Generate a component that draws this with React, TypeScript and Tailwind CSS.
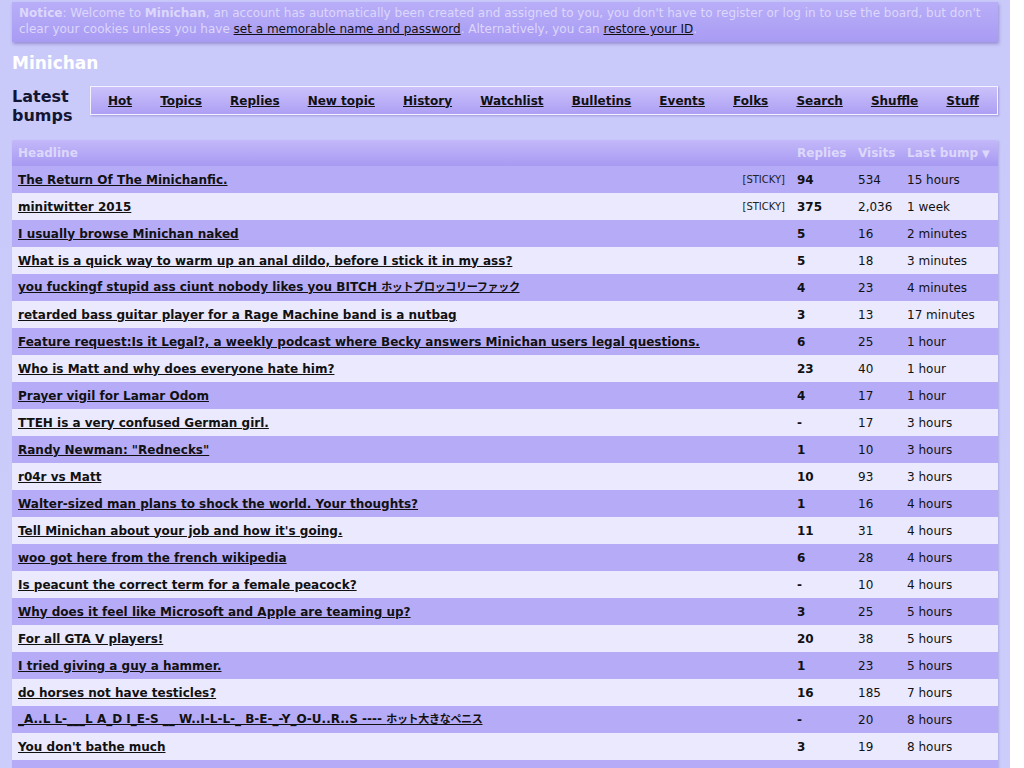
import React from "react";

type Row = { t: string; j?: string; s?: boolean; r: string; v: string; l: string };

const rows: Row[] = [
  { t: "The Return Of The Minichanfic.", s: true, r: "94", v: "534", l: "15 hours" },
  { t: "minitwitter 2015", s: true, r: "375", v: "2,036", l: "1 week" },
  { t: "I usually browse Minichan naked", r: "5", v: "16", l: "2 minutes" },
  { t: "What is a quick way to warm up an anal dildo, before I stick it in my ass?", r: "5", v: "18", l: "3 minutes" },
  { t: "you fuckingf stupid ass ciunt nobody likes you BITCH ", j: "ホットブロッコリーファック", r: "4", v: "23", l: "4 minutes" },
  { t: "retarded bass guitar player for a Rage Machine band is a nutbag", r: "3", v: "13", l: "17 minutes" },
  { t: "Feature request:Is it Legal?, a weekly podcast where Becky answers Minichan users legal questions.", r: "6", v: "25", l: "1 hour" },
  { t: "Who is Matt and why does everyone hate him?", r: "23", v: "40", l: "1 hour" },
  { t: "Prayer vigil for Lamar Odom", r: "4", v: "17", l: "1 hour" },
  { t: "TTEH is a very confused German girl.", r: "-", v: "17", l: "3 hours" },
  { t: "Randy Newman: \"Rednecks\"", r: "1", v: "10", l: "3 hours" },
  { t: "r04r vs Matt", r: "10", v: "93", l: "3 hours" },
  { t: "Walter-sized man plans to shock the world. Your thoughts?", r: "1", v: "16", l: "4 hours" },
  { t: "Tell Minichan about your job and how it's going.", r: "11", v: "31", l: "4 hours" },
  { t: "woo got here from the french wikipedia", r: "6", v: "28", l: "4 hours" },
  { t: "Is peacunt the correct term for a female peacock?", r: "-", v: "10", l: "4 hours" },
  { t: "Why does it feel like Microsoft and Apple are teaming up?", r: "3", v: "25", l: "5 hours" },
  { t: "For all GTA V players!", r: "20", v: "38", l: "5 hours" },
  { t: "I tried giving a guy a hammer.", r: "1", v: "23", l: "5 hours" },
  { t: "do horses not have testicles?", r: "16", v: "185", l: "7 hours" },
  { t: "_A..L L-___L A_D I_E-S __ W..I-L-L-_ B-E-_-Y_O-U..R..S ---- ", j: "ホット大きなペニス", r: "-", v: "20", l: "8 hours" },
  { t: "You don't bathe much", r: "3", v: "19", l: "8 hours" },
];

const nav = ["Hot", "Topics", "Replies", "New topic", "History", "Watchlist", "Bulletins", "Events", "Folks", "Search", "Shuffle", "Stuff"];

export default function App() {
  return (
    <div
      className="min-h-screen w-full bg-white overflow-hidden"
      style={{ fontFamily: '"DejaVu Sans", "Noto Sans CJK JP", sans-serif' }}
    >
      <div className="w-[1010px] h-[768px] overflow-hidden bg-gradient-to-b from-[#c9c9fa] to-[#cdcdfb] px-3 pt-[2px] text-[12px] text-[#111]">
        <div className="bg-gradient-to-b from-[#b9aef8] to-[#a89bf3] shadow-[1px_2px_3px_rgba(60,40,140,0.35)] px-[7px] pt-[3px] pb-[4px] leading-[16px] text-[#dcd7fc] h-[40px]">
          <p>
            <b>Notice</b>: Welcome to <b>Minichan</b>, an account has automatically been created and assigned to you, you don't have to register or log in to use the board, but don't clear your cookies unless you have{" "}
            <a className="underline text-[#111]">set a memorable name and password</a>. Alternatively, you can{" "}
            <a className="underline text-[#111]">restore your ID</a>.
          </p>
        </div>

        <div className="mt-[11px] text-[17px] font-bold text-white leading-[20px]">Minichan</div>

        <div className="mt-[13px] flex items-start">
          <div className="w-[78px] text-[16px] font-bold leading-[19px] text-[#141433] pt-[1px]">
            Latest
            <br />
            bumps
          </div>
          <div className="flex-1 h-[29px] border border-[#f4f2ff] bg-gradient-to-b from-[#cbc1fa] to-[#ad9ff4] shadow-[1px_1px_2px_rgba(60,40,140,0.3)] flex items-center justify-between pl-[17px] pr-[18px]">
            {nav.map((n) => (
              <a key={n} className="font-bold underline text-[#111] leading-[14px]">
                {n}
              </a>
            ))}
          </div>
        </div>

        <div className="mt-[15px] shadow-[1px_1px_2px_rgba(60,40,140,0.2)]">
          <div className="flex h-[26px] items-center bg-gradient-to-b from-[#c3b8f9] to-[#a899f2] rounded-t-[2px] font-bold text-[#dcd8fc]">
            <div className="flex-1 pl-[6px]">Headline</div>
            <div className="w-[61px] pl-[6px]">Replies</div>
            <div className="w-[49px] pl-[6px]">Visits</div>
            <div className="w-[97px] pl-[6px] flex items-center">
              Last bump<span className="ml-[4px] text-[10px]">▼</span>
            </div>
          </div>
          {rows.map((r, i) => (
            <div
              key={i}
              className={
                "flex h-[27px] items-center " +
                (i % 2 === 0 ? "bg-[#b6abf7]" : "bg-[#ebe9fd]")
              }
            >
              <div className="flex-1 pl-[6px] pr-[6px] flex items-center justify-between whitespace-nowrap overflow-hidden">
                <a className="font-bold underline text-[#111]">
                  {r.t}
                  {r.j && <span className="text-[11px] font-bold tracking-[-0.3px]">{r.j}</span>}
                </a>
                {r.s && <span className="text-[10px] text-[#222] self-start mt-[1px]">[STICKY]</span>}
              </div>
              <div className="w-[61px] pl-[6px] font-bold">{r.r}</div>
              <div className="w-[49px] pl-[6px]">{r.v}</div>
              <div className="w-[97px] pl-[6px]">{r.l}</div>
            </div>
          ))}
          <div className="h-[27px] bg-[#b6abf7]" />
        </div>
      </div>
    </div>
  );
}
